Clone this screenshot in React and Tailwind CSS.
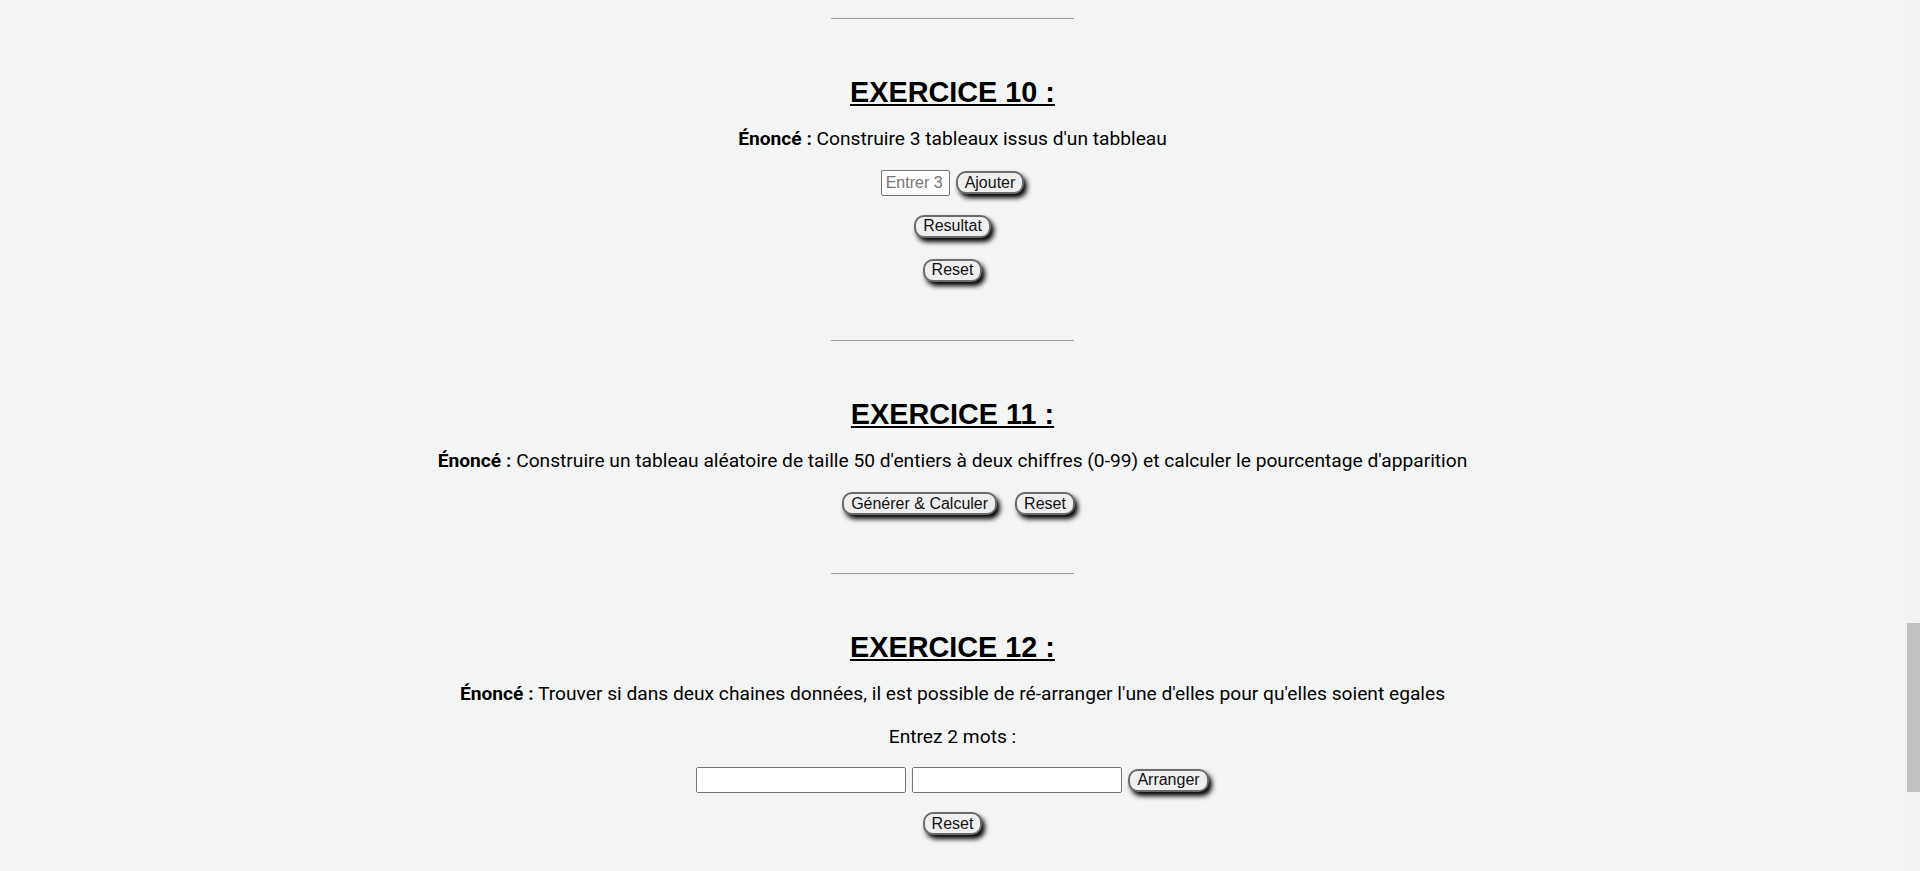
import React from 'react'

const btn = 'h-[23px] px-[7px] bg-[#efefef] border-2 border-[#6b6b6b] rounded-[10px] text-[16px] leading-[18px] text-[#111] font-["Liberation_Sans",Arial,sans-serif] shadow-[3px_4px_5px_#000]'
const field = 'h-[26px] bg-white border border-[#767676] rounded-[2px] px-[4px] text-[16px] font-["Liberation_Sans",Arial,sans-serif] placeholder:text-[#757575] outline-none'

function Rule({ className = '' }) {
  return <div className={`w-[243px] h-px bg-[#9a9a9a] ${className}`} />
}

function Title({ children }) {
  return (
    <h2 className='mt-[57px] text-[28.8px] leading-[33px] font-bold underline text-black font-["Liberation_Sans",Arial,sans-serif]'>
      {children}
    </h2>
  )
}

function Enonce({ children }) {
  return (
    <p className="mt-[19px] text-[19.2px] leading-[22.5px] text-black">
      <span className="font-bold">Énoncé :</span> {children}
    </p>
  )
}

export default function App() {
  return (
    <div className="flex h-[871px] overflow-hidden bg-[#f3f5f4] font-['Roboto',sans-serif]">
      <div className="flex-1 flex flex-col items-center">
        <Rule className="mt-[18px]" />

        {/* exercice 10 */}
        <Title>EXERCICE 10 :</Title>
        <Enonce>Construire 3 tableaux issus d'un tabbleau</Enonce>
        <div className="mt-[19px] flex items-center gap-[6px] h-[26px]">
          <input className={`${field} w-[69px]`} placeholder="Entrer 3" />
          <button className={btn}>Ajouter</button>
        </div>
        <div className="mt-[19px] flex">
          <button className={btn}>Resultat</button>
        </div>
        <div className="mt-[21px] flex">
          <button className={btn}>Reset</button>
        </div>

        <Rule className="mt-[58px]" />

        {/* exercice 11 */}
        <Title>EXERCICE 11 :</Title>
        <Enonce>Construire un tableau aléatoire de taille 50 d'entiers à deux chiffres (0-99) et calculer le pourcentage d'apparition</Enonce>
        <div className="mt-[20px] flex items-center gap-[18px] pl-[12px]">
          <button className={btn}>Générer &amp; Calculer</button>
          <button className={btn}>Reset</button>
        </div>

        <Rule className="mt-[58px]" />

        {/* exercice 12 */}
        <Title>EXERCICE 12 :</Title>
        <Enonce>Trouver si dans deux chaines données, il est possible de ré-arranger l'une d'elles pour qu'elles soient egales</Enonce>
        <p className="mt-[20px] text-[19.2px] leading-[22.5px] text-black">Entrez 2 mots :</p>
        <div className="mt-[19px] flex items-center gap-[6px] h-[26px]">
          <input className={`${field} w-[210px]`} />
          <input className={`${field} w-[210px]`} />
          <button className={btn}>Arranger</button>
        </div>
        <div className="mt-[19px] flex">
          <button className={btn}>Reset</button>
        </div>
      </div>

      {/* scrollbar */}
      <div className="w-[15px] bg-[#f1f1f1] pt-[623px] pl-[2px]">
        <div className="h-[169px] bg-[#c1c1c1]" />
      </div>
    </div>
  )
}
